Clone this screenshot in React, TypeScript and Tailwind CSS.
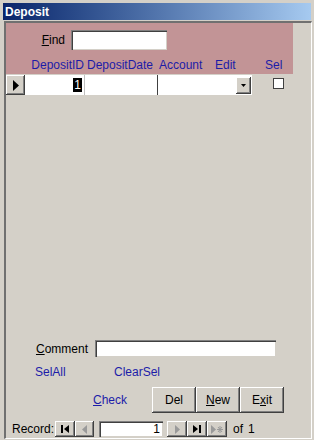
const raised =
  "bg-[#d4d0c8] shadow-[inset_-1px_-1px_0_#404040,inset_1px_1px_0_#ffffff,inset_-2px_-2px_0_#808080]";
const sunken =
  "bg-white shadow-[inset_1px_1px_0_#808080,inset_2px_2px_0_#404040,inset_-1px_-1px_0_#d4d0c8]";

function NavButton({ children, w = "w-[20px]" }: { children: React.ReactNode; w?: string }) {
  return (
    <div className={`${w} h-[16px] flex items-center justify-center ${raised}`}>
      {children}
    </div>
  );
}

export default function App() {
  return (
    <div className="w-[314px] h-[440px] bg-[#d4d0c8] flex flex-col pt-[3px] overflow-hidden text-[12px] text-black font-['Liberation_Sans',Arial,sans-serif]">
      {/* title bar */}
      <div className="mx-[3px] h-[17px] shrink-0 flex items-center pl-[2px] bg-gradient-to-r from-[#0a246a] to-[#a6caf0] text-white font-bold text-[12px]">
        Deposit
      </div>

      {/* form body */}
      <div className="mt-[1px] ml-[4px] mr-[2px] mb-[1px] flex-1 flex flex-col border-t-2 border-l-2 border-t-[#707070] border-l-[#707070] border-r border-b border-r-white border-b-white">
        {/* header band */}
        <div className="w-[287px] h-[51px] shrink-0 bg-[#c29496] flex flex-col">
          <div className="flex items-center mt-[7px] h-[20px]">
            <span className="w-[59px] text-right">
              <u>F</u>ind
            </span>
            <div className={`ml-[6px] w-[96px] h-[20px] ${sunken}`} />
          </div>
          <div className="flex mt-[6px] h-[18px] leading-[18px] text-[#1c1ca8] whitespace-nowrap">
            <span className="ml-[19px] w-[59px] text-right">DepositID</span>
            <span className="w-[73px] pl-[3px]">DepositDate</span>
            <span className="w-[56px] pl-[2px]">Account</span>
            <span className="w-[50px] pl-[2px]">Edit</span>
            <span className="pl-[2px]">Sel</span>
          </div>
        </div>

        {/* data row */}
        <div className="flex mt-[1px] h-[20px] shrink-0">
          <div className={`w-[19px] flex items-center justify-center ${raised}`}>
            <svg width="6" height="11" viewBox="0 0 6 11">
              <path d="M0 0L6 5.5L0 11Z" fill="#000" />
            </svg>
          </div>
          <div className="w-[59px] bg-white flex items-center justify-end pr-[2px]">
            <span className="bg-black text-white leading-[14px] px-[1px]">1</span>
          </div>
          <div className="w-[73px] bg-white border-l border-[#c0c0c0]" />
          <div className="w-[95px] bg-white border-l border-[#404040] flex justify-end items-center pr-[1px]">
            <div className={`w-[15px] h-[17px] flex items-center justify-center ${raised}`}>
              <svg width="5" height="3" viewBox="0 0 5 3">
                <path d="M0 0H5L2.5 3Z" fill="#000" />
              </svg>
            </div>
          </div>
          <div className="ml-[21px] mt-[3px] w-[11px] h-[11px] bg-white border border-[#404040]" />
        </div>

        <div className="flex-1" />

        {/* comment */}
        <div className="flex items-center h-[17px] shrink-0">
          <span className="w-[82px] text-right">
            <u>C</u>omment
          </span>
          <div className={`ml-[7px] w-[181px] h-[17px] ${sunken}`} />
        </div>

        {/* select links */}
        <div className="flex items-center h-[16px] mt-[7px] shrink-0 text-[#1c1ca8]">
          <span className="ml-[29px] w-[79px]">SelAll</span>
          <span>ClearSel</span>
        </div>

        {/* buttons */}
        <div className="flex items-center h-[26px] mt-[7px] shrink-0">
          <span className="ml-[87px] w-[59px] text-[#1c1ca8]">
            <u>C</u>heck
          </span>
          <div className={`w-[44px] h-[26px] flex items-center justify-center ${raised}`}>Del</div>
          <div className={`w-[44px] h-[26px] flex items-center justify-center ${raised}`}>
            <span>
              <u>N</u>ew
            </span>
          </div>
          <div className={`w-[44px] h-[26px] flex items-center justify-center ${raised}`}>
            <span>
              E<u>x</u>it
            </span>
          </div>
        </div>

        {/* record navigation */}
        <div className="flex items-center h-[16px] mt-[8px] mb-[1px] shrink-0">
          <span className="ml-[6px] w-[43px]">Record:</span>
          <NavButton>
            <svg width="8" height="8" viewBox="0 0 8 8">
              <rect x="0" y="0" width="2" height="8" fill="#000" />
              <path d="M8 0L3 4L8 8Z" fill="#000" />
            </svg>
          </NavButton>
          <NavButton w="w-[19px]">
            <svg width="5" height="9" viewBox="0 0 5 9">
              <path d="M5 0L0 4.5L5 9Z" fill="#9a9a9a" />
            </svg>
          </NavButton>
          <div className={`ml-[5px] w-[64px] h-[16px] flex items-center justify-end pr-[3px] ${sunken}`}>1</div>
          <div className="ml-[4px] flex">
            <NavButton>
              <svg width="5" height="9" viewBox="0 0 5 9">
                <path d="M0 0L5 4.5L0 9Z" fill="#9a9a9a" />
              </svg>
            </NavButton>
            <NavButton>
              <svg width="8" height="8" viewBox="0 0 8 8">
                <path d="M0 0L5 4L0 8Z" fill="#000" />
                <rect x="6" y="0" width="2" height="8" fill="#000" />
              </svg>
            </NavButton>
            <NavButton>
              <svg width="12" height="9" viewBox="0 0 12 9">
                <path d="M0 0L5 4.5L0 9Z" fill="#9a9a9a" />
                <path d="M9 1V8M6 4.5H12M7 2L11 7M11 2L7 7" stroke="#9a9a9a" strokeWidth="1" />
              </svg>
            </NavButton>
          </div>
          <span className="ml-[6px]">of</span>
          <span className="ml-[5px]">1</span>
        </div>
      </div>
    </div>
  );
}
